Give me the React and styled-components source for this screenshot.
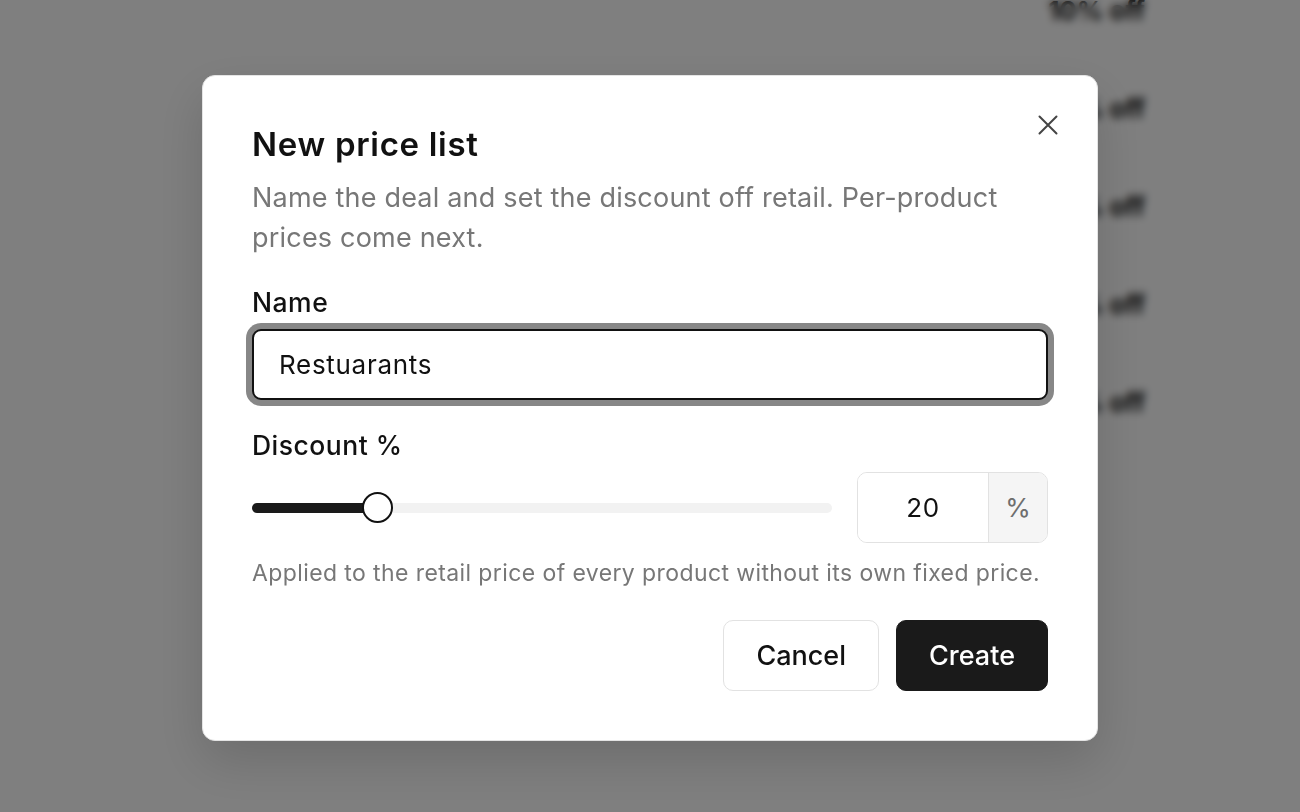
import React, { useState } from 'react';
import styled, { createGlobalStyle } from 'styled-components';

const GlobalStyle = createGlobalStyle`
  * { box-sizing: border-box; }
  html, body {
    margin: 0;
    padding: 0;
    height: 100%;
    background: #ffffff;
    font-family: Inter, "Noto Sans", "Liberation Sans", sans-serif;
    color: #111111;
  }
  #root { height: 100%; }
`;

const Page = styled.div`
  height: 812px;
  overflow: hidden;
  background: #ffffff;
`;

const List = styled.ul`
  list-style: none;
  margin: -41px 0 0;
  padding: 0 155px;
`;

const Row = styled.li`
  display: flex;
  align-items: center;
  justify-content: flex-end;
  height: 98px;
  padding-top: 6px;
  border-bottom: 1px solid #f1f1f1;
  font-size: 26px;
  font-weight: 700;
  color: #111;
`;

const Overlay = styled.div`
  position: fixed;
  inset: 0;
  display: flex;
  align-items: center;
  justify-content: center;
  padding-top: 4px;
  background: rgba(0, 0, 0, 0.5);
  backdrop-filter: blur(4px);
`;

const Modal = styled.div`
  position: relative;
  width: 896px;
  padding: 48px 49px 49px;
  background: #ffffff;
  border: 1px solid #e4e4e4;
  border-radius: 13px;
  box-shadow: 0 20px 50px rgba(0, 0, 0, 0.15);
`;

const CloseButton = styled.button`
  position: absolute;
  top: 35px;
  right: 35px;
  width: 28px;
  height: 28px;
  display: flex;
  align-items: center;
  justify-content: center;
  padding: 0;
  border: none;
  background: none;
  color: #444444;
  cursor: pointer;
`;

const Title = styled.h2`
  margin: 0;
  font-size: 33px;
  line-height: 40px;
  font-weight: 600;
  letter-spacing: 0.7px;
`;

const Description = styled.p`
  margin: 14px 0 0;
  font-size: 27px;
  line-height: 40px;
  letter-spacing: 0.2px;
  color: #777777;
`;

const Label = styled.label`
  display: block;
  margin-top: ${(p) => p.$top}px;
  font-size: 26.5px;
  line-height: 34px;
  font-weight: 500;
  letter-spacing: 0.5px;
`;

const TextInput = styled.input`
  display: block;
  width: 100%;
  height: 71px;
  margin-top: 10px;
  padding: 0 25px;
  border: 2px solid #111111;
  border-radius: 9px;
  box-shadow: 0 0 0 6px #878787;
  font-family: inherit;
  font-size: 26px;
  letter-spacing: 0.7px;
  color: #111;
  outline: none;
`;

const SliderRow = styled.div`
  display: flex;
  align-items: center;
  gap: 25px;
  margin-top: 10px;
`;

const Track = styled.div`
  position: relative;
  flex: 1;
  height: 10px;
  border-radius: 5px;
  background: #f2f2f2;
`;

const Fill = styled.div`
  height: 100%;
  border-radius: 5px;
  background: #1a1a1a;
`;

const Thumb = styled.div`
  position: absolute;
  top: 50%;
  width: 31px;
  height: 31px;
  margin-top: -15.5px;
  border: 2px solid #111;
  border-radius: 50%;
  background: #ffffff;
`;

const NumberBox = styled.div`
  display: flex;
  width: 191px;
  height: 71px;
  border: 1px solid #e2e2e2;
  border-radius: 10px;
  overflow: hidden;
`;

const NumberInput = styled.input`
  width: 130px;
  border: none;
  outline: none;
  text-align: center;
  font-family: inherit;
  font-size: 26px;
  letter-spacing: 0.5px;
  color: #111;
  background: #fff;
`;

const Addon = styled.span`
  flex: 1;
  display: flex;
  align-items: center;
  justify-content: center;
  border-left: 1px solid #e2e2e2;
  background: #f5f5f5;
  color: #6e6e6e;
  font-size: 26px;
`;

const Hint = styled.p`
  margin: 14px 0 0;
  font-size: 23px;
  line-height: 32px;
  letter-spacing: 0.4px;
  color: #777777;
`;

const Actions = styled.div`
  display: flex;
  justify-content: flex-end;
  gap: 17px;
  margin-top: 31px;
`;

const Button = styled.button`
  height: 71px;
  padding: 0 32px;
  border: 1px solid ${(p) => (p.$primary ? '#1a1a1a' : '#e2e2e2')};
  border-radius: 10px;
  background: ${(p) => (p.$primary ? '#1a1a1a' : '#ffffff')};
  color: ${(p) => (p.$primary ? '#ffffff' : '#111111')};
  font-family: inherit;
  font-size: 27px;
  font-weight: 500;
  cursor: pointer;
`;

const rows = ['10% off', '15% off', '20% off', '25% off', '30% off'];

export default function App() {
  const [name, setName] = useState('Restuarants');
  const [discount, setDiscount] = useState(20);
  const thumbSize = 31;
  const pct = discount / 100;

  return (
    <>
      <GlobalStyle />
      <Page>
        <List>
          {rows.map((r) => (
            <Row key={r}>{r}</Row>
          ))}
        </List>
      </Page>
      <Overlay>
        <Modal role="dialog" aria-labelledby="pl-title">
          <CloseButton aria-label="Close">
            <svg width="20" height="20" viewBox="0 0 20 20" fill="none" stroke="currentColor" strokeWidth="2" strokeLinecap="round">
              <path d="M1.5 1.5 L18.5 18.5 M18.5 1.5 L1.5 18.5" />
            </svg>
          </CloseButton>
          <Title id="pl-title">New price list</Title>
          <Description>
            Name the deal and set the discount off retail. Per-product prices come next.
          </Description>
          <Label $top={27} htmlFor="pl-name">Name</Label>
          <TextInput id="pl-name" value={name} onChange={(e) => setName(e.target.value)} />
          <Label $top={28}>Discount %</Label>
          <SliderRow>
            <Track>
              <Fill style={{ width: `calc(${thumbSize / 2}px + (100% - ${thumbSize}px) * ${pct})` }} />
              <Thumb style={{ left: `calc((100% - ${thumbSize}px) * ${pct})` }} />
            </Track>
            <NumberBox>
              <NumberInput
                value={discount}
                onChange={(e) => setDiscount(Math.max(0, Math.min(100, Number(e.target.value) || 0)))}
              />
              <Addon>%</Addon>
            </NumberBox>
          </SliderRow>
          <Hint>Applied to the retail price of every product without its own fixed price.</Hint>
          <Actions>
            <Button>Cancel</Button>
            <Button $primary>Create</Button>
          </Actions>
        </Modal>
      </Overlay>
    </>
  );
}
